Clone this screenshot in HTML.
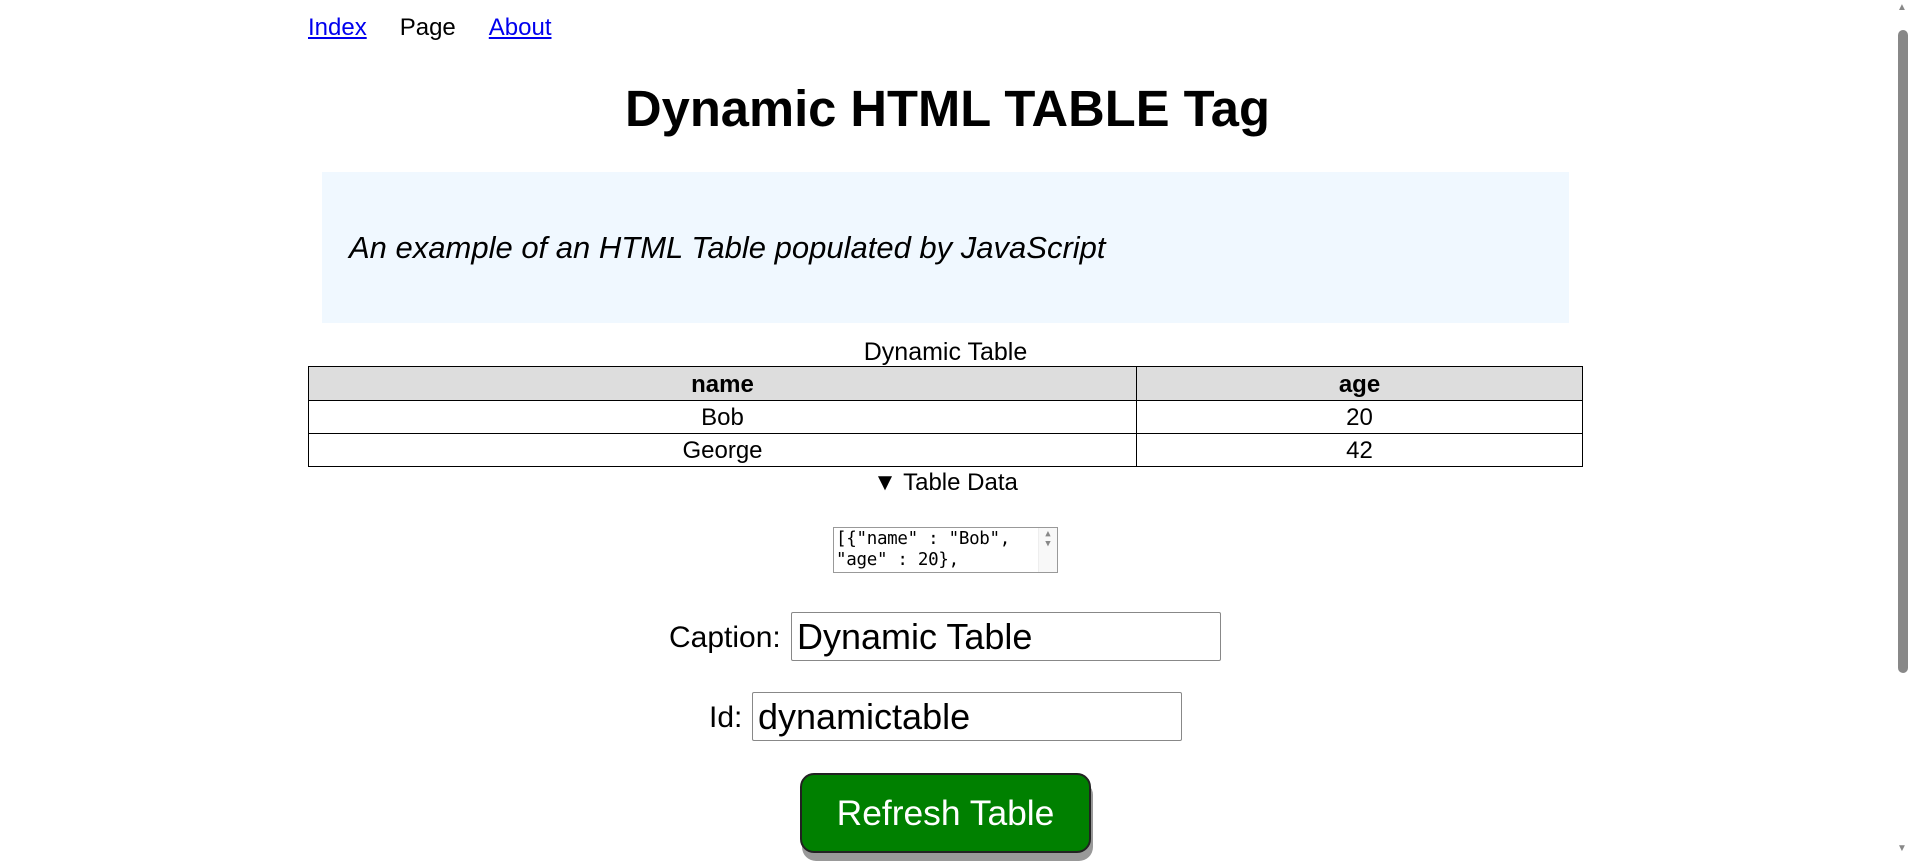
<!DOCTYPE html>
<html><head><meta charset="utf-8"><style>
html,body{margin:0;padding:0;width:1911px;height:860px;overflow:hidden;background:#fff;font-family:"Liberation Sans",Arial,sans-serif;color:#000}
.a{position:absolute;white-space:nowrap}
a{color:#00e;text-decoration:underline}
table{border-collapse:collapse;position:absolute;left:308px;top:366px;width:1275px;font-size:24px}
td,th{border:1px solid #000;text-align:center;padding:2px 0 0 0;height:30px;line-height:30px}
th{background:#ddd;height:31px}
.inp{position:absolute;border:1px solid #888;border-radius:2px;box-sizing:border-box;font-size:36px;line-height:48px;padding-left:5px}
</style></head><body>
<div class="a" style="left:308px;top:14px;font-size:24px;line-height:28px"><a>Index</a><span style="margin-left:33px">Page</span><a style="margin-left:33px">About</a></div>
<div class="a" style="left:0;width:1895px;text-align:center;top:79px;font-size:50.7px;font-weight:bold;line-height:60px">Dynamic HTML TABLE Tag</div>
<div class="a" style="left:322px;top:172px;width:1247px;height:151px;background:#f0f8ff"></div>
<div class="a" style="left:349px;top:229px;font-size:31px;font-style:italic;line-height:38px">An example of an HTML Table populated by JavaScript</div>
<div class="a" style="left:308px;width:1275px;text-align:center;top:338px;font-size:25px;line-height:28px">Dynamic Table</div>
<table>
<tr><th style="width:827px">name</th><th>age</th></tr>
<tr><td>Bob</td><td>20</td></tr>
<tr><td>George</td><td>42</td></tr>
</table>
<div class="a" style="left:308px;width:1275px;text-align:center;top:469px;font-size:24px;line-height:28px">▼ Table Data</div>
<div class="a" style="left:833px;top:527px;width:225px;height:46px;border:1px solid #999;box-sizing:border-box;font-family:'DejaVu Sans Mono','Liberation Mono',monospace;font-size:17.5px;line-height:21px;padding:1px 2px;overflow:hidden;letter-spacing:-0.3px">[{"name" : "Bob",<br>"age" : 20},
<div style="position:absolute;right:0;top:0;width:18px;height:44px;background:#f8f8f8;border-left:1px solid #eee"><div style="font-size:9px;line-height:10px;color:#888;text-align:center;margin-top:1px;letter-spacing:0">▲<br>▼</div></div></div>
<div class="a" style="left:669px;top:620px;font-size:30px;line-height:36px">Caption:</div>
<div class="inp" style="left:791px;top:612px;width:430px;height:49px">Dynamic Table</div>
<div class="a" style="left:709px;top:700px;font-size:30px;line-height:36px">Id:</div>
<div class="inp" style="left:752px;top:692px;width:430px;height:49px">dynamictable</div>
<div class="a" style="left:802px;top:781px;width:291px;height:80px;background:#999;border-radius:14px"></div>
<div class="a" style="left:800px;top:773px;width:291px;height:80px;background:#008000;border:2px solid #222;box-sizing:border-box;border-radius:14px;color:#fff;font-size:35.4px;text-align:center;line-height:76px">Refresh Table</div>
<div class="a" style="left:1895px;top:0;width:16px;height:860px;background:#fff"></div>
<div class="a" style="left:1898px;top:30px;width:10px;height:643px;background:#888;border-radius:5px"></div>
<div class="a" style="left:1897px;top:2px;font-size:10px;color:#888">▲</div>
<div class="a" style="left:1897px;top:843px;font-size:10px;color:#888">▼</div>
</body></html>
